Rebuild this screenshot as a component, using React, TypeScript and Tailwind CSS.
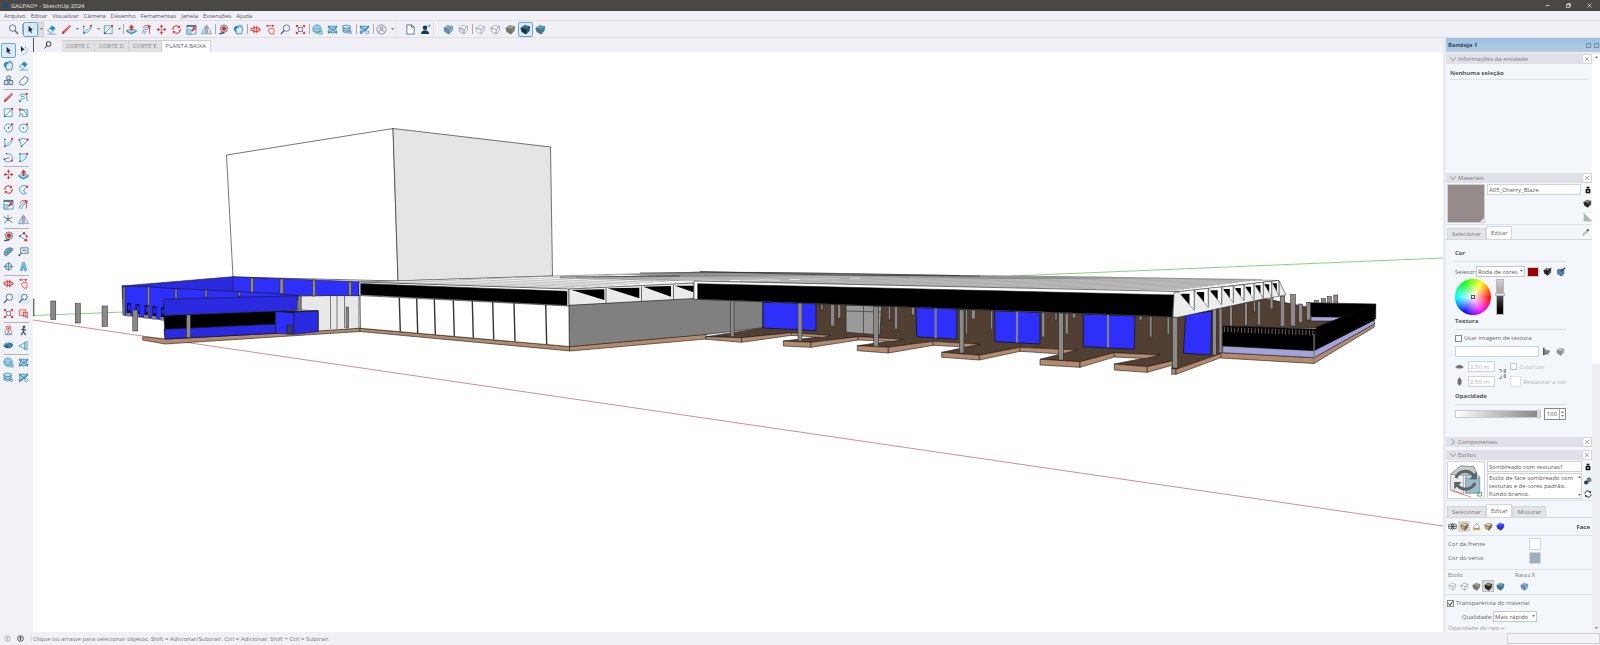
import { type ReactNode } from 'react';
import { clsx } from 'clsx';

const B = '#2f8dbb';
const N = '#34536f';
const R = '#dd3236';

const cube = (top: string, left: string, right: string, edge = '#5f7482') => (
  <g stroke={edge} strokeWidth="1.4" strokeLinejoin="round">
    <path d="M2 9l8-6 11 3-7 6z" fill={top} />
    <path d="M2 9l12 3-1 10-9-5z" fill={left} />
    <path d="M21 6l-7 6-1 10 7-7z" fill={right} />
  </g>
);

const icons: Record<string, ReactNode> = {
  search: <g stroke={N} strokeWidth="1.6"><circle cx="10" cy="9" r="7" fill="#eef5fa" /><path d="M15 14l7 8" strokeWidth="2.6" /></g>,
  zoom: <g stroke={N} strokeWidth="1.6"><circle cx="14" cy="9" r="7" fill="#eef5fa" /><path d="M9 14l-7 8" strokeWidth="2.6" /></g>,
  zoomWin: <g><path d="M2 2h20v20H2z" fill="#dcedf7" stroke="#a9cfe4" strokeDasharray="3 2" /><g stroke={N} strokeWidth="1.6"><circle cx="14" cy="9" r="6" fill="#eef5fa" /><path d="M10 13l-7 8" strokeWidth="2.4" /></g></g>,
  select: <path d="M8 4l9 9-4 .5 2.5 5-2 1-2.5-5L8 18z" fill="#16233a" />,
  lasso: <g><path d="M6 2l9 9-5 .5L7 16z" fill="#16233a" /><path d="M15 5c9 3 7 12-7 17" fill="none" stroke={B} strokeWidth="1.6" strokeDasharray="3 2" /></g>,
  eraser: <g><path d="M3 14L13 3l8 6-10 11z" fill={B} /><path d="M3 14l5-5 8 6-5 5z" fill="#d9ecf6" stroke={B} /><path d="M3 22h19" stroke={B} strokeWidth="1.5" /></g>,
  tag: <path d="M3 15L14 3l8 4-1 7-9 8-7-1z" fill="#f2f8fc" stroke={N} strokeWidth="1.6" />,
  paint: <g><path d="M6 11l9-7 6 6-2 11-11 1z" fill="#d9ecf6" stroke={N} strokeWidth="1.4" /><path d="M2 8c5-7 11-5 10 1-4-2-7 2-5 8-4 0-6-4-5-9z" fill={B} /><path d="M12 3c6-2 9 2 8 6" fill="none" stroke={B} strokeWidth="1.8" /></g>,
  stamp: <g fill="#d3dee6" stroke={N} strokeWidth="1.6"><path d="M8 4c0-3 8-3 8 0v6H8zM3 12h8v9H3zM13 12h8v9h-8z" /></g>,
  pencil: <g><path d="M2 22l2-6L19 2l3 3L8 19z" fill={R} /><path d="M6 17L20 4" stroke="#fff" strokeWidth="1" /><path d="M2 22l2-5 3 3z" fill="#444" /></g>,
  freehand: <g fill="none" stroke={B} strokeWidth="1.8"><path d="M4 21c1-9 12-4 10-9S6 12 5 8s8-5 13-1c3 4-1 7 3 13" /><circle cx="4" cy="20" r="1.5" fill={N} /><circle cx="19" cy="4" r="2.5" fill={R} stroke="none" /></g>,
  arc: <g fill="none" strokeWidth="1.6"><path d="M4 5v15c9 0 15-7 16-15" stroke={B} /><path d="M4 20L20 5" stroke={N} strokeDasharray="3 2" /><circle cx="4" cy="5" r="1.6" fill={N} /><circle cx="4" cy="20" r="1.6" fill={N} /><circle cx="20" cy="4" r="2.5" fill={R} /></g>,
  arc2: <g fill="none" strokeWidth="1.6"><path d="M3 6c8-5 14-3 18 1L8 21z" stroke={B} fill="#e6f3fa" /><circle cx="3" cy="6" r="2" fill={R} /><circle cx="8" cy="20" r="1.6" fill={N} /><circle cx="21" cy="6" r="2.5" fill={R} /></g>,
  arc3: <g fill="none" strokeWidth="1.6"><path d="M7 3c14 0 20 16 7 18S2 15 2 15" stroke={B} /><path d="M2 16l12-4" stroke={N} /><circle cx="8" cy="4" r="1.6" fill={N} /><circle cx="3" cy="16" r="1.6" fill={N} /><circle cx="19" cy="19" r="2.5" fill={R} /></g>,
  pie: <g fill="none" strokeWidth="1.6"><path d="M4 4h16c0 10-8 16-16 17z" stroke={B} fill="#d9ecf6" /><circle cx="4" cy="4" r="1.6" fill={N} /><circle cx="4" cy="20" r="1.6" fill={N} /><circle cx="20" cy="4" r="2.5" fill={R} /></g>,
  rect: <g fill="none" strokeWidth="1.6"><path d="M3 4h17v17H3z" stroke={B} fill="#eef6fb" /><path d="M3 21L20 4" stroke={N} strokeWidth="1.2" /><circle cx="4" cy="20" r="1.8" fill={N} /><circle cx="20" cy="4" r="2.5" fill={R} /></g>,
  rotRect: <g fill="none" strokeWidth="1.6"><path d="M4 6h17v15H10v-6H4z" stroke={B} fill="#eef6fb" /><path d="M4 6c8-1 14 5 15 13" stroke={N} /><circle cx="4" cy="5" r="2.500" fill={R} /><circle cx="4" cy="19" r="1.6" fill={N} /></g>,
  circle: <g fill="none" strokeWidth="1.6"><circle cx="12" cy="13" r="9" stroke={B} fill="#eef6fb" /><path d="M12 13l8-8" stroke={N} strokeWidth="1.2" /><circle cx="12" cy="13" r="1.8" fill={N} /><circle cx="20" cy="5" r="2.5" fill={R} /></g>,
  polygon: <g fill="none" strokeWidth="1.6"><path d="M7 5h10l5 8-5 9H7l-5-9z" stroke={B} fill="#eef6fb" /><circle cx="12" cy="13" r="1.8" fill={N} /><circle cx="20" cy="5" r="2.5" fill={R} /></g>,
  push: <g><path d="M1 14l11-4 11 4-11 6z" fill="#b9def0" stroke={B} strokeWidth="1.5" /><path d="M1 14v3l11 6 11-6v-3l-11 6z" fill={B} /><path d="M12 1l6 7h-4v7h-4V8H6z" fill={R} /></g>,
  follow: <g fill="none" strokeWidth="1.8"><path d="M3 21c1-8 6-13 14-15M8 22c0-6 4-10 9-12" stroke={B} /><path d="M3 9c4-6 10-7 15-5" stroke={R} /><path d="M14 2l8 2-4 7z" fill={R} /><path d="M19 9l-1 12" stroke={R} /></g>,
  move: <path d="M12 1l4 5h-3v4h-2V6H8zM12 23l4-5h-3v-4h-2v4H8zM1 12l5-4v3h4v2H6v3zM23 12l-5-4v3h-4v2h4v3z" fill={R} />,
  rotate: <g fill="none" stroke={R} strokeWidth="2.2"><path d="M4 13c-1-8 8-12 13-7M20 11c1 8-8 12-13 7" /><path d="M14 8l6 1V3zM10 16l-6-1v6z" fill={R} stroke="none" /></g>,
  offset: <g fill="none" strokeWidth="1.8"><path d="M19 5C9 0 1 8 4 15s9 8 14 5c-6-1-8-9 1-12z" stroke={B} fill="#e6f3fa" /><circle cx="20" cy="6" r="2.5" fill={R} /></g>,
  scale: <g><path d="M2 3h20v19H2z" fill="#eef6fb" stroke={B} strokeWidth="1.6" /><path d="M2 3h20v3H2z" fill={N} /><path d="M2 12h9v10H2z" fill="#a6d3e8" stroke={B} /><path d="M11 14l5-5-3-2h8v7l-2-2-5 5z" fill={R} /></g>,
  flip: <g strokeWidth="1.4"><path d="M10 4v17H1z" fill="#c9e5f3" stroke={B} /><path d="M14 4v17h9z" fill="#e6e6ee" stroke="#77808c" /><path d="M12 1v22" stroke={R} strokeWidth="1" /></g>,
  tape: <g><circle cx="13" cy="10" r="8" fill="#ecc3c5" stroke={N} strokeWidth="1.4" /><circle cx="13" cy="10" r="4" fill={R} stroke="#70202a" /><path d="M2 20l11-3 2 3-11 3z" fill={N} /></g>,
  dimension: <g fill="none" strokeWidth="1.6"><path d="M4 11L13 4M4 11l13 9M13 5l6 7" stroke={B} /><circle cx="13" cy="5" r="2.6" fill={R} /><circle cx="4" cy="11" r="2" fill={N} /><circle cx="19" cy="12" r="2.5" fill={R} /><circle cx="17" cy="20" r="3" fill={R} /></g>,
  protractor: <path d="M3 19C2 8 10 2 20 5l2 3L7 22zM9 16c0-5 3-8 8-7z" fill="#74b3d1" stroke={N} strokeWidth="1.6" fillRule="evenodd" />,
  text: <g fill="#eef6fb" stroke={N} strokeWidth="1.5"><path d="M6 4h16v12H6z" /><path d="M3 21l4-6M10 12l3-5 3 5M18 8v4" /><circle cx="3" cy="20" r="1.5" fill={N} /></g>,
  section: <g fill="none" stroke={N} strokeWidth="1.6"><circle cx="12" cy="12" r="7" fill="#dbe6ee" /><path d="M1 12h22M12 2v20" stroke={B} /></g>,
  text3d: <path d="M5 21L10 3h4l5 17-4 2-4-10-2 9z" fill="#7cc2e4" stroke={B} strokeWidth="1.4" />,
  axes: <g fill="none" strokeWidth="2"><path d="M11 12V2" stroke={B} /><path d="M11 12l10 7" stroke="#3aa54a" /><path d="M11 12l9-5" stroke={R} /><path d="M11 12L3 20M11 12L2 6" stroke={N} /><circle cx="11" cy="12" r="2.5" fill={B} stroke="none" /></g>,
  orbit: <g fill="none" stroke={R} strokeWidth="2.2"><ellipse cx="12" cy="12" rx="10" ry="4" /><path d="M9 4v16M15 4v16" /></g>,
  hand: <g><path d="M2 4l5-3v2h9V1l5 3-5 3V5H7v2z" fill={R} /><path d="M8 12c2-3 11-3 12 0l-1 10h-6l-5-6z" fill="#f9e9e7" stroke={R} strokeWidth="1.6" /></g>,
  extents: <g><circle cx="12" cy="12" r="5" fill="#eef0f4" stroke={N} strokeWidth="1.4" /><path d="M2 2h6L2 8zM22 2v6l-6-6zM2 22v-6l6 6zM22 22h-6l6-6z" fill={R} /><path d="M4 4l5 5M20 4l-5 5M4 20l5-5M20 20l-5-5" stroke={R} strokeWidth="1.6" /></g>,
  window: <g fill="none" strokeWidth="1.6"><path d="M3 4h14v12H3z" stroke={R} fill="#fbeeee" /><path d="M9 9h6M12 10h9v9h-9z" stroke={R} /><path d="M17 19l5 3" stroke={N} /></g>,
  camera: <g fill="none" strokeWidth="1.6"><circle cx="12" cy="7" r="5" stroke={R} fill="#f9e2e3" /><circle cx="12" cy="7" r="2" fill={R} /><path d="M5 12v9h14v-9M9 22l3-9 3 9" stroke="#6e7480" /></g>,
  walk: <g fill="none" stroke={N} strokeWidth="2.6"><circle cx="13" cy="4" r="1.6" fill={N} /><path d="M12 7v8l5 7M12 14l-5 8M7 11l5-3 5 4" /></g>,
  look: <g><path d="M1 12C5 4 18 3 22 11c-3 9-16 10-21 1z" fill={N} /><circle cx="14" cy="12" r="5" fill={B} /><path d="M2 11c5 0 7-5 12-5" stroke="#9dcde6" strokeWidth="2" fill="none" /></g>,
  cut: <g fill="none" strokeWidth="1.6"><path d="M2 13L20 3v19z" stroke={B} fill="#d9ecf6" /><path d="M15 6v15" stroke={N} /></g>,
  warehouse: <g fill="none" stroke={B} strokeWidth="2"><circle cx="11" cy="11" r="9" fill="#d9ecf6" /><path d="M5 15V9l6-4 6 4v6l-6 3zM11 18v-8M7 10l4 2 5-2" strokeWidth="1.6" /><path d="M15 16h7v6h-7z" fill="#bcd9ea" strokeWidth="1.4" /></g>,
  ext: <g fill="none" stroke={B} strokeWidth="2"><path d="M3 4l5 2 4-2 4 2 5-2v4l-3 3 3 3v6l-5-2-4 2-4-2-5 2v-6l3-3-3-3z" fill="#a6d3e8" /><path d="M4 6l17 13M21 6L4 19" stroke={N} strokeWidth="1.4" /></g>,
  layers: <g fill="#bfe0f0" stroke={B} strokeWidth="1.6"><path d="M2 4l8-2 8 2v13l-8 3-8-3z" /><path d="M2 8l8 3 8-3M2 13l8 3 8-3" stroke={N} /><path d="M13 17h9l-4 5z" fill="#d9ecf6" /></g>,
  gear: <g fill="none" stroke={B} strokeWidth="2"><path d="M3 4l5 2 4-2 4 2 5-2v4l-8 6-5 5-5 2v-6l3-3-3-3z" fill="#a6d3e8" /><path d="M4 6l12 9M21 6L4 19" stroke={N} strokeWidth="1.4" /><circle cx="18" cy="18" r="3.5" fill="#eef6fb" strokeWidth="1.6" /></g>,
  user: <g fill="none" stroke="#5c6b7d" strokeWidth="1.5"><circle cx="12" cy="12" r="10" /><circle cx="12" cy="9" r="3.2" /><path d="M6 19c0-7 12-7 12 0" /></g>,
  doc: <path d="M4 2h10l6 5v15H4zM14 2v5h6" fill="#fff" stroke={N} strokeWidth="1.6" />,
  person: <g fill="#17395c"><circle cx="11" cy="8" r="5" /><path d="M2 22c0-11 18-11 18 0z" /><path d="M20 1v6M17 4h6" stroke={B} strokeWidth="1.6" /></g>,
  cubeXray: cube('#84abc4', '#6a90ab', '#8fb4cb', '#5a7e96'),
  cubeBack: cube('#f3f6f8', '#d5dde4', '#eef2f5', '#8d98a3'),
  cubeWire: cube('none', 'none', '#e2eaf0', '#9aa5ae'),
  cubeHidden: cube('#fff', '#fff', '#fff', '#7d8893'),
  cubeShade: cube('#a5a592', '#77776a', '#89897a', '#66675c'),
  cubeTex: cube('#3c6f90', '#1c2e3c', '#2f5c75', '#1f3444'),
  cubeMono: cube('#4cabd4', '#5c7066', '#3388b0', '#446b7c'),
  cubeDark: cube('#8b8b7a', '#23231d', '#3c3b2f', '#1d1d18'),
  cubeTan: cube('#efdcb5', '#d0ad70', '#7a6c50', '#5e5848'),
  cubeBlue: cube('#4a52ff', '#2a2ff0', '#2127d0', '#3237c9'),
  cubeGrey: cube('#c5c5c5', '#8f8f8f', '#a8a8a8', '#7a7a7a'),
  edges: <g fill="none" stroke="#2e3338" strokeWidth="1.8"><path d="M2 7l7-2v14l-7-2zM15 5l7 2v10l-7 2zM2 12h20M12 3v18" /></g>,
  ground: <g><path d="M1 22l4-8h14l4 8z" fill="#e3a95e" /><path d="M5 12l7-8 7 8v5H5z" fill="#fff" stroke="#555" strokeWidth="1.5" /></g>,
  down: <g fill="#111"><path d="M7 2h10v3h-3v4h5v13H5V9h5V5H7z" /><path d="M9 15h6M12 12v6" stroke="#fff" strokeWidth="2" /></g>,
  half: <g><path d="M1 1h22v22H1z" fill="#fff" stroke="#d0d4d8" /><path d="M2 2v20h20z" fill="#a9b8bf" /></g>,
  dropper: <g><path d="M3 22l2-6 8-8 3 3-8 8z" fill="#dfe6ea" stroke="#6a747c" strokeWidth="1.5" /><path d="M13 6l5-4 4 4-4 5z" fill="#4e5a63" /></g>,
  check: <g>{cube('#777', '#222', '#444', '#222')}<path d="M9 8l4 5L22 2" fill="none" stroke="#111" strokeWidth="2.5" /></g>,
  screen: <g><path d="M2 7h16v12H2z" fill="#4b8fd0" stroke="#1f3e60" strokeWidth="1.8" /><path d="M7 22h8" stroke="#1f3e60" strokeWidth="3" /><path d="M10 12L22 2" stroke="#1f3e60" strokeWidth="3" /></g>,
  folder: <g><path d="M3 2h4v20H3z" fill="#444" /><path d="M7 8h6l2 2h6l-5 9H7z" fill="#8d8a73" stroke="#555" /></g>,
  horiz: <path d="M0 13l7-4c3-2 7-2 10 0l7 4-7 4H7z" fill="#707070" />,
  vert: <path d="M12 0l5 7c1 3 1 7 0 10l-5 7-5-7V7z" fill="#707070" />,
  refresh: <g fill="none" stroke="#222" strokeWidth="3"><path d="M3 11c0-9 12-11 16-4M21 13c0 9-12 11-16 4" /><path d="M21 2v7h-6zM3 22v-7h6z" fill="#222" stroke="none" /></g>,
  mix: <g stroke="#1d2730" strokeWidth="1.500"><path d="M2 12h9v9H2z" fill="#30414d" /><path d="M10 4l8-2 4 8-6 6-6-3z" fill="#70889a" /></g>,
};

function Icon({ name, className = 'size-3' }: { name: string; className?: string }) {
  return <svg viewBox="0 0 24 24" fill="none" aria-hidden="true" className={clsx('shrink-0', className)}>{icons[name]}</svg>;
}

const Caret = ({ className = 'w-1 h-[3px]' }: { className?: string }) => (
  <svg viewBox="0 0 6 4" aria-hidden="true" className={clsx('fill-[#777]', className)}><path d="M0 0h6L3 4z" /></svg>
);

const menus = ['Arquivo', 'Editar', 'Visualizar', 'Câmera', 'Desenho', 'Ferramentas', 'Janela', 'Extensões', 'Ajuda'];

// 'v' drop-down arrow, '|' separator, '/' end of a toolbar
const topTools = 'search | select v eraser pencil v arc v rect v | push follow move rotate scale flip | tape paint | orbit hand zoom extents | warehouse ext layers | gear | user v / doc person / cubeXray cubeBack | cubeWire cubeHidden cubeShade cubeTex cubeMono'.split(' ');

const sideTools = [
  ['select', 'lasso', 'paint', 'eraser', 'stamp', 'tag'],
  ['pencil', 'freehand', 'rect', 'rotRect', 'circle', 'polygon', 'arc', 'arc2', 'arc3', 'pie'],
  ['move', 'push', 'rotate', 'offset', 'scale', 'follow', 'axes', 'flip'],
  ['tape', 'dimension', 'protractor', 'text', 'section', 'text3d'],
  ['orbit', 'hand', 'zoom', 'zoomWin', 'extents', 'window'],
  ['camera', 'walk', 'look', 'cut'],
  ['warehouse', 'ext', 'layers', 'gear'],
];

function ToolButton({ name, active }: { name: string; active?: boolean }) {
  return (
    <button
      aria-label={name}
      className={clsx('w-[15px] h-[15px] shrink-0 flex items-center justify-center', active && 'bg-[#d9ebf9] border border-[#6aa7d2] rounded-[2px]')}
    >
      <Icon name={name} className="size-[11px]" />
    </button>
  );
}

function TopToolbar() {
  return (
    <div className="h-[18px] shrink-0 flex items-center pl-[6px] bg-[#f0f0f6] border-y border-[#dedee4]">
      {topTools.map((t, i) => {
        if (t === '|') return <span key={i} className="w-[2px] h-[10px] flex justify-center"><span className="w-px bg-[#a9a9a6]" /></span>;
        if (t === '/') return <span key={i} className="w-2 h-4 flex"><span className="w-px bg-[#e0e0e6]" /></span>;
        if (t === 'v') return <button key={i} aria-label="Mais" className={clsx('w-[6px] h-[15px] flex items-center justify-center', i === 3 && 'bg-[#e0e0e4] border border-[#cfcfd4]')}><Caret className="w-[3px] h-[2px]" /></button>;
        return <ToolButton key={i} name={t} active={t === 'select' || t === 'cubeTex'} />;
      })}
    </div>
  );
}

function SideToolbar() {
  return (
    <div className="w-[33px] shrink-0 bg-[#f0f2f8] pt-[5px] flex flex-col">
      {sideTools.map((group, g) => (
        <div key={g} className="mx-px">
          {g > 0 && <div className="h-[2px] mx-[3px] flex items-center"><div className="h-px w-full bg-[#b4b4b6]" /></div>}
          <div className="grid grid-cols-2 w-[30px]">
            {group.map((t, i) => <ToolButton key={i} name={t} active={t === 'select'} />)}
          </div>
        </div>
      ))}
    </div>
  );
}

/* ---------- model ---------- */

const K = '#1a1a1a';
const BLUE = '#2f2ffc';
const DBLUE = '#2a2ae0';
const CLAY = '#b48a6e';
const SOIL = '#523f33';

type P = { d: string; f?: string; s?: string; w?: number };
const Poly = ({ d, f = '#fff', s = K, w = 0.6 }: P) => <polygon points={d} fill={f} stroke={s} strokeWidth={w} />;

// x, top, bottom, width
const Post = ({ p }: { p: number[] }) => (
  <rect x={p[0] - p[3] / 2} y={p[1]} width={p[3]} height={p[2] - p[1]} fill="#8d8986" stroke="#222" strokeWidth="0.5" />
);

const pads = [
  ['706,336.7 741.7,337.7 741.7,342.3 706,339.3', '741.7,337.7 791.7,332.7 791.7,335.3 741.7,342.3', '791.7,332.7 831,335.500 823,337.500 791.7,335.3'],
  ['783.3,341 811,342.3 811,347.3 783.3,346', '811,342.3 858.3,336.7 858.3,340 811,347.3', '858.3,336.7 903,339.3 893,341.500 858.3,340'],
  ['857.3,345.7 888.3,347.3 888.3,353 857.3,350.7', '888.3,347.3 933.3,341.3 933.3,345.3 888.3,353', '933.3,341.3 980,344.3 967,347 933.3,345.3'],
  ['941.7,352.3 979.3,355.3 979.3,360 941.7,357.3', '979.3,355.3 1020,347.3 1020,351.3 979.3,360', '1020,347.3 1076.7,350 1062,354 1020,351.3'],
  ['1040,359.3 1080,361.7 1080,367.3 1040,365', '1080,361.7 1114.3,352.7 1114.3,357 1080,367.3', '1114.3,352.7 1160,355 1146,358.500 1114.3,357'],
  ['1114.3,364 1147.3,366.7 1147.3,372.3 1114.3,370', '1147.3,366.7 1173,360.7 1173,365 1147.3,372.3'],
  ['1171.7,368.3 1176,369.3 1176,374.3 1171.7,374.3', '1176,369.3 1221.7,353.3 1221.7,357.3 1176,374.3'],
];

const panels: [string, number][] = [
  ['763,302 816,303.5 816,330.7 763,328', 0],
  ['916,307.5 957,309 956.7,339.3 916.7,336.7', 935.7],
  ['994.5,310.7 1040,312.3 1040,344 995,341.7', 1017],
  ['1083.3,314 1135,316 1134.3,349.3 1083.3,346.7', 1108],
  ['1185.7,315 1211.7,311 1210.7,355 1183.3,353.3', 0],
];

const shortPosts = [
  [822, 304, 310, 2], [832.7, 304, 326, 4], [839.3, 304, 318, 3], [889.3, 306, 320, 2], [896, 306, 329, 3], [913, 307, 315, 3],
  [973.3, 310, 319, 4], [966.5, 310, 334, 2], [991.7, 311, 329, 2], [1043.3, 312, 337, 3], [1066.7, 313, 334, 3], [1056, 313, 320, 2],
  [1074, 313, 318, 3], [1140.5, 316, 320, 3], [1150.7, 316, 337, 2.5], [1168.3, 317, 334, 2.5],
];

const longPosts = [
  [732.3, 300, 336.7, 3.5], [800, 302, 341, 4], [876, 306.7, 346.7, 4.5], [961.7, 310, 353, 4.5], [1061, 312.7, 360, 4.5], [1175, 317, 368, 5],
  [1214.5, 309, 355, 3.5], [1220.5, 308, 353, 3], [1231, 306, 326, 2.5], [1246, 303, 325, 2.5], [1254.5, 301, 312, 2], [1259, 301, 325, 3],
  [1271.5, 297, 309, 3], [1282.5, 296, 326.5, 4.5], [1293, 294.5, 326, 5], [1300.7, 304, 322.5, 4], [1308.5, 302.5, 320, 4],
  [1316.5, 300.5, 303, 4], [1323.5, 298.5, 303, 4], [1329.5, 296.5, 303, 4], [1335.8, 295, 303, 4],
];

// saw-tooth gable: x and height of each ridge, and the lower edge below it
const toothX = [1178.3, 1194.3, 1208.3, 1221.7, 1233.3, 1244, 1254, 1263.3, 1271.7, 1279];
const toothTop = [291.7, 290, 288.3, 287, 286, 284.7, 283.3, 282.3, 281.3, 280.7];
const toothBot = [317, 310.5, 307.5, 305, 303, 301, 300, 298.5, 297, 296];

function Model() {
  return (
    <svg viewBox="33 52 1410 580" preserveAspectRatio="xMidYMid slice" className="block w-full h-full bg-white" role="img" aria-label="GALPAO">
      <path d="M33 315.5L124 312M1012 276L1443 258" stroke="#7fd67f" strokeWidth="1" />
      <path d="M33 320L1443 526" stroke="#d08080" strokeWidth="0.9" />
      {[[33, 299, 316, 2], [53.3, 301, 319.5, 5], [77.8, 303.5, 323, 5], [104.8, 306, 326.5, 5.5]].map((p) => <Post key={p[0]} p={p} />)}

      {/* tower */}
      <Poly d="226.5,155 393,128.5 398,281 233,277" />
      <Poly d="393,128.5 550.5,147 552.5,276 398,281" f="#e5e5e5" />

      {/* blue wing */}
      <Poly d="142.7,336.7 165,339 275.7,333 360,328 360,331.5 165,344 142.7,340" f={CLAY} />
      <Poly d="301,296 359,295 359,328.3 318,331 318,311 301,310" f="#e8e8e8" />
      <path d="M330.500 296v33M337 296v33M344.500 296v32" stroke="#333" strokeWidth="0.6" />
      <Post p={[347.3, 307, 328, 2.5]} />
      <Poly d="122,286 232.7,276.7 232.7,292 146.7,288" f={DBLUE} />
      <Poly d="232.7,276.7 359,281.7 359,295.7 298,295.5 232.7,292" f={BLUE} />
      {[[252, 278, 293, 3], [281.7, 279, 293.5, 3.5], [314, 280, 296, 3], [350, 282, 295.5, 3]].map((p) => <Post key={p[0]} p={p} />)}
      <Poly d="122,286 146.7,286.7 164,288 276,293.5 300,296 300,300 164,302 164,320 123.3,315" f={BLUE} />
      {[[124, 287, 315, 2], [148.5, 287, 317, 2.5], [176, 289, 299, 2], [206, 290, 297, 2], [239.5, 292, 296, 2]].map((p) => <Post key={p[0]} p={p} />)}
      {[127, 135.5, 144.5, 152.5, 161].map((x, i) => (
        <g key={x}>
          <rect x={x} y={303 + i} width="4" height="11" fill="#121244" />
          <rect x={x + 1} y={305 + i} width="2.5" height="5" fill={DBLUE} />
          <rect x={x - 0.5} y={313 + i} width="4" height="3.5" fill="#8a7a70" />
        </g>
      ))}
      <Post p={[135.3, 310, 331, 5]} />
      <Poly d="164,315.5 275.7,311 275.7,333.3 165,339" f="#000" />
      <Poly d="164,329.3 275.7,324 275.7,333.3 165,339" f={DBLUE} />
      <Poly d="164,299.3 297.3,295.7 297.3,310.5 164,315.5" f={DBLUE} />
      <Post p={[299.5, 296, 310, 3]} />
      <Post p={[188.5, 315, 337.5, 4]} />
      <Poly d="275.7,311.5 294,311.5 294,334.3 275.7,333.3" f={BLUE} />
      <Poly d="275.7,311.5 318.3,310.7 294,313" f="#111" />
      <Poly d="294,312 318.3,311 318.3,331.7 294,334.3" f={DBLUE} />
      <path d="M287 334v-9h5v9z" fill="#3d3a70" stroke={K} strokeWidth="0.6" />

      {/* first shed */}
      <Poly d="360,328.3 569.5,346.5 706,334 706,339 570.5,351 360,331.5" f={CLAY} />
      <path d="M569.5 346v5" stroke={K} strokeWidth="0.7" />
      <Poly d="360,294 569,305 569.5,346.5 360.5,328.3" />
      {[399.3, 416.7, 434.3, 453.3, 472.3, 492.7, 514, 545.7].map((x) => (
        <path key={x} d={`M${x} ${296 + (x - 360) * 0.045}L${x + 1} ${328 + (x - 360) * 0.087}`} stroke="#333" strokeWidth="1.4" />
      ))}
      <Poly d="569.3,305 694,298 763.3,301.7 763,327.7 706,334.5 569.3,346.7" f="#808080" />
      <Poly d="359,282 552,276 703.3,272 820,273 953,275.5 1100,277 1279,280.5 1179,292 694,284 569,289.5" f="#f6f6f6" w={0.4} />
      <polygon points="620,274.5 703,271.5 820,273 953,275.5 1150,278.5 1000,279 820,276 660,276.5" fill="#989898" />
      {Array.from({ length: 9 }, (_, i) => (
        <path key={i} d={`M${375 + i * 28} ${281.5 - i * 0.8}L${575 + i * 13} ${288 - i * 0.9}`} stroke="#8a8a8a" strokeWidth="0.5" />
      ))}
      {Array.from({ length: 8 }, (_, i) => (
        <path key={i} d={`M${560 + i * 16} ${278 - i * 0.4}L${700 + i * 30} ${281 - i * 0.5}`} stroke="#777" strokeWidth="0.5" />
      ))}
      {Array.from({ length: 15 }, (_, i) => (
        <path key={i} d={`M${700 + i * 20} ${282 - i * 0.45}L${1178 + i * 6} ${290 - i * 0.75}`} stroke="#8c8c8c" strokeWidth="0.6" />
      ))}
      <path d="M640 273l120-.5 200 3M700 271.5l130 3.5 150 1M560 277l120-1" stroke="#2c2c2c" strokeWidth="0.7" fill="none" />
      <Poly d="359,282 569,289 569,306 359,295.5" />
      <Poly d="360.7,283.6 567,291.3 567,305.3 360.7,294.7" f="#000" />
      <Poly d="569,289 694,283 694,298.5 569,305.3" f="#ebebeb" />
      <path d="M571.7 290l32.6-.7v10.7zM607.7 288.300l31.600-.6v10.600zM643.300 286.700l27.700-.7v10.700zM675 285.700h18.500v6.600z" fill="#000" />
      <path d="M606 288v15M641.500 286.500v15M673.500 285v14.500" stroke="#333" strokeWidth="0.7" />

      {/* second shed, floor and inner wall */}
      <Poly
        d="706,336.7 741.7,337.7 791.7,332.7 831,335.5 783.3,341 811,342.3 858.3,336.7 903,339.3 857.3,345.7 888.3,347.3 933.3,341.3 980,344.3 941.7,352.3 979.3,355.3 1020,347.3 1076.7,350 1040,359.3 1080,361.7 1114.3,352.7 1160,355 1114.3,364 1147.3,366.7 1173,360.7 1171.7,368.3 1176,369.3 1221.7,353.3 1224,327 1318,328 1345,318 1312,308 1262,298 1173,314 763,300 763,328"
        f={SOIL}
      />
      {pads.flat().map((d) => <Poly key={d} d={d} f={CLAY} />)}
      <Poly d="846,305 881.5,306 880,335 846,332.3" f="#999" />
      <path d="M846 311l35 1M863.500 305v28" stroke="#444" strokeWidth="0.8" />
      {panels.map(([d, x]) => (
        <g key={d}>
          <Poly d={d} f={BLUE} w={0.9} />
          {x > 0 && <path d={`M${x} ${308 + (x - 936) * 0.04}V${338 + (x - 936) * 0.055}`} stroke="#7f7f8c" strokeWidth="2.2" />}
        </g>
      ))}
      {shortPosts.map((p) => <Post key={p[0]} p={p} />)}

      {/* terrace */}
      <Poly d="1311,316.5 1341,316.5 1338,321 1311,321" f="#a9a9e0" />
      <Poly d="1308,302.7 1375.7,304 1375.7,319 1341.7,317.3 1311.7,316.7" f="#000" />
      {longPosts.map((p) => <Post key={p[0]} p={p} />)}
      <Poly d="1221,352.7 1314,357.7 1374.3,323.5 1374.3,327 1314,363.5 1221,358" f={CLAY} />
      <Poly d="1222.7,345 1314,350 1374.3,320 1374.3,324 1314,357.7 1222.7,352.7" f="#a3a3dc" />
      <Poly d="1223,326 1316,329 1314,350.7 1222.7,346" f="#000" />
      <path d="M1224 329.500L1316 333" stroke="#6b635c" strokeWidth="5" strokeDasharray="1 2.400" />
      <Poly d="1316,327.3 1375.7,304 1374.3,320 1314,350.7" f="#000" />
      <path d="M1314 334v29.5" stroke="#777" strokeWidth="1.2" />

      {/* second shed, fascia and saw-tooth gable */}
      <Poly d="694,281 1179,291.5 1173,317 694,299.3" />
      <Poly d="697.7,283.7 1174,295 1172.3,316.7 697.7,299" f="#000" />
      <Poly d="1178.3,291.7 1279,280.7 1286,295 1261.7,299.3 1178,317.3 1173,317 1174,293" f="#ececec" w={0.5} />
      {toothX.slice(0, -1).map((x, i) => {
        const n = toothX[i + 1];
        const w = n - x;
        const t = toothTop[i];
        const h = toothBot[i + 1] - t;
        return (
          <g key={x} stroke="#444" strokeWidth="0.5">
            <polygon points={`${x},${t} ${n},${toothTop[i + 1]} ${n},${t + h}`} fill="#fff" />
            <polygon points={`${x + w * 0.2},${t + 2} ${x + w * 0.7},${t + 2} ${x + w * 0.7},${t + h * 0.68} ${x + w * 0.2},${t + h * 0.2}`} fill="#000" stroke="none" />
            <path d={`M${n} ${toothTop[i + 1]}v${h}`} />
          </g>
        );
      })}
    </svg>
  );
}

/* ---------- tray ---------- */

const field = 'bg-white border border-[#cfd2d8] text-[#555] px-px min-w-0 outline-none';

function SectionHeader({ title, open = true }: { title: string; open?: boolean }) {
  return (
    <div className="h-[10px] flex items-center bg-[#e0e1e8] text-[#777]">
      <svg viewBox="0 0 10 10" className={clsx('size-[6px] ml-1 mr-[2px]', !open && '-rotate-90')} fill="none" stroke="#888" strokeWidth="1.4"><path d="M0 2l5 6 5-6" /></svg>
      <h2 className="flex-1">{title}</h2>
      <button aria-label={`Fechar ${title}`} className="size-[10px] bg-white border border-[#d5d6dc] flex items-center justify-center">
        <svg viewBox="0 0 8 8" className="size-[4px]" stroke="#888" strokeWidth="1.4"><path d="M0 0l8 8M8 0L0 8" /></svg>
      </button>
    </div>
  );
}

function Tabs({ items }: { items: string[] }) {
  return (
    <div className="h-[13px] flex items-end pl-px border-b border-[#d3d6dc]">
      {items.map((t) => (
        <button key={t} className={clsx('px-[4px] border border-b-0 border-[#d3d6dc]', t === 'Editar' ? 'h-[13px] bg-white text-[#666]' : 'h-[11px] bg-[#e3e4e9] text-[#777]')}>{t}</button>
      ))}
    </div>
  );
}

function Dropdown({ id, value, className }: { id: string; value: string; className: string }) {
  return (
    <div className={clsx('relative', className)}>
      <select id={id} className="appearance-none w-full h-[11px] bg-white border border-[#c3c6cc] text-[#555] pl-px block"><option>{value}</option></select>
      <Caret className="absolute right-[2px] top-1 w-[3px] h-[2px] pointer-events-none" />
    </div>
  );
}

const Tick = () => <svg viewBox="0 0 10 10" className="absolute inset-px size-[5px] pointer-events-none" fill="none" stroke="#222" strokeWidth="2"><path d="M1 5l3 4 5-8" /></svg>;

function Check({ label, checked, dim }: { label: string; checked?: boolean; dim?: boolean }) {
  return (
    <label className={clsx('flex items-center gap-[2px] whitespace-nowrap', dim ? 'text-[#b5b8be]' : 'text-[#666]')}>
      <span className="relative size-[7px]">
        <input type="checkbox" defaultChecked={checked} disabled={dim} className={clsx('appearance-none block size-[7px] bg-white border', dim ? 'border-[#c3c6cc]' : 'border-[#888]')} />
        {checked && <Tick />}
      </span>
      {label}
    </label>
  );
}

const Heading = ({ children }: { children: ReactNode }) => (
  <h3 className="h-[13px] font-bold text-[#555] border-b border-[#d9dce2]">{children}</h3>
);

function Materials() {
  return (
    <section>
      <SectionHeader title="Materiais" />
      <div className="flex gap-[2px] h-[42px] pt-px pl-px border-b border-[#dfe2e8]">
        <div className="w-[38px] h-[39px] bg-[#968b8b] border border-[#cfcfd2] flex items-end justify-end">
          <svg viewBox="0 0 4 4" className="size-1" fill="#eee"><path d="M4 0v4H0z" /></svg>
        </div>
        <input aria-label="Nome do material" defaultValue="A05_Cherry_Blaze" className={clsx(field, 'flex-1 h-[11px]')} />
        <div className="w-[9px] flex flex-col items-center justify-between py-[2px]">
          <Icon name="down" className="size-2" />
          <Icon name="cubeDark" className="size-[9px]" />
          <Icon name="half" className="size-[10px]" />
        </div>
      </div>
      <div className="relative pt-[2px]">
        <Tabs items={['Selecionar', 'Editar']} />
        <Icon name="dropper" className="absolute right-[2px] top-[3px] size-2" />
      </div>
      <div className="pl-[9px] pr-[26px] pt-[9px] h-[197px]">
        <Heading>Cor</Heading>
        <div className="flex items-center h-[11px] mt-[4px]">
          <label htmlFor="picker" className="w-[21px] text-[#666]">Seletor:</label>
          <Dropdown id="picker" value="Roda de cores" className="w-[49px]" />
          <button aria-label="Cor atual" className="w-3 h-[10px] mx-[2px] bg-[#980000] border border-[#ccc]" />
          <Icon name="check" className="size-[9px] mx-[2px]" />
          <Icon name="screen" className="size-[9px] ml-[3px]" />
        </div>
        <div className="flex gap-[5px] mt-[2px] h-9">
          <div className="size-9 rounded-full flex items-center justify-center bg-[radial-gradient(circle,white,transparent_70%),conic-gradient(from_90deg,#f00,#f0f,#00f,#0ff,#0f0,#ff0,#f00)]">
            <span className="size-1 border border-[#555]" />
          </div>
          <div className="w-[8px] h-9 flex flex-col border border-[#bbb]">
            <div className="h-[13px] bg-linear-to-b from-[#d6cccf] to-[#aaa0a0]" />
            <div className="h-[3px] -mx-[2px] bg-[#e6e6ea] border border-[#bbb]" />
            <div className="flex-1 bg-linear-to-b from-[#555] to-black" />
          </div>
        </div>
        <div className="mt-[2px]"><Heading>Textura</Heading></div>
        <div className="mt-1 h-[8px] flex items-center"><Check label="Usar imagem de textura" /></div>
        <div className="flex items-center mt-[4px]">
          <input aria-label="Imagem de textura" className={clsx(field, 'w-[84px] h-[11px]')} />
          <Icon name="folder" className="size-[9px] mx-[3px]" />
          <Icon name="cubeGrey" className="size-[9px] ml-[2px]" />
        </div>
        <div className="flex items-center mt-1 h-[26px] text-[#b0b2b8]">
          <div className="w-[41px] flex flex-col gap-1">
            {['horiz', 'vert'].map((n) => (
              <div key={n} className="flex items-center gap-[4px]">
                <Icon name={n} className="size-[9px]" />
                <input aria-label={n} disabled defaultValue="2,50 m" className="w-[27px] h-[11px] bg-white border border-[#cfd2d8] px-px" />
              </div>
            ))}
          </div>
          <svg viewBox="0 0 10 14" className="w-[9px] h-3 mx-1" fill="none" stroke="#777" strokeWidth="1.2"><path d="M0 1h3v4M0 13h3V9M7 1h2v4H7zM7 8h2v4H7z" /></svg>
          <div className="flex flex-col gap-1">
            <div className="h-[11px] flex items-center"><Check label="Colorizar" dim /></div>
            <div className="h-[11px] flex items-center gap-[2px] whitespace-nowrap"><button aria-label="Restaurar" className="size-[11px] shrink-0 bg-white border border-[#dcdfe4]" />Restaurar a cor</div>
          </div>
        </div>
        <div className="mt-[5px]"><Heading>Opacidade</Heading></div>
        <div className="flex items-center mt-[3px] gap-[3px]">
          <input aria-label="Opacidade" type="range" defaultValue={100} className="appearance-none w-[86px] h-2 border border-[#c9c9cc] bg-linear-to-r from-white to-[#858585] [&::-webkit-slider-thumb]:appearance-none [&::-webkit-slider-thumb]:w-[3px] [&::-webkit-slider-thumb]:h-[10px] [&::-webkit-slider-thumb]:bg-[#d8d8da]" />
          <div className="flex w-[23px] h-[12px] border border-[#888] bg-white">
            <input aria-label="Valor da opacidade" defaultValue="100" className="w-[15px] text-center text-[#555] border-r border-[#aaa]" />
            <div className="flex-1 flex flex-col items-center justify-evenly"><Caret className="rotate-180 w-[3px] h-[2px]" /><Caret className="w-[3px] h-[2px]" /></div>
          </div>
        </div>
      </div>
    </section>
  );
}

function Styles() {
  return (
    <section>
      <SectionHeader title="Estilos" />
      <div className="flex gap-[2px] h-[41px] pt-px pl-px border-b border-[#dfe2e8]">
        <svg viewBox="0 0 37 38" className="w-[38px] h-[38px] shrink-0 bg-white border border-[#cfd2d8]">
          <path d="M2 13L13 4l14 1 3 8-14 1z" fill="#c9ccce" stroke="#666" strokeWidth="0.7" />
          <path d="M2 13v16l14 5V14z" fill="#e9ebec" stroke="#888" strokeWidth="0.7" />
          <path d="M18 16h15v17H18z" fill="#9dbdcd" stroke="#5d7f91" strokeWidth="0.7" />
          <ellipse cx="25.5" cy="16" rx="7.5" ry="2.5" fill="#bcd5e1" stroke="#5d7f91" strokeWidth="0.7" />
          <path d="M2 30l22 7" stroke="#d55" strokeWidth="0.7" />
          <path d="M8 17C10 9 22 7 27 15M28 22c-3 8-14 9-19 2" fill="none" stroke="#5c6367" strokeWidth="3.2" />
          <path d="M30 10v8h-8zM6 29v-8h8z" fill="#5c6367" />
          <path d="M31 32h4v4h-4z" fill="none" stroke="#59a659" />
        </svg>
        <div className="flex-1 flex flex-col gap-px min-w-0">
          <input aria-label="Nome do estilo" defaultValue="Sombreado com texturas1" className={clsx(field, 'h-[11px]')} />
          <div className="h-[26px] flex border border-[#cfd2d8] bg-white">
            <textarea aria-label="Descrição" defaultValue="Estilo de face sombreado com texturas e de cores padrão. Fundo branco." className="flex-1 min-w-0 resize-none overflow-hidden leading-[8px] pl-px text-[#555] outline-none" />
            <div className="w-[3px] flex flex-col items-center justify-between py-[2px]"><Caret className="rotate-180 w-[3px] h-[2px]" /><Caret className="w-[3px] h-[2px]" /></div>
          </div>
        </div>
        <div className="w-[8px] flex flex-col items-center justify-between py-[2px]">
          <Icon name="down" className="size-2" />
          <Icon name="mix" className="size-2" />
          <Icon name="refresh" className="size-2" />
        </div>
      </div>
      <div className="pt-1"><Tabs items={['Selecionar', 'Editar', 'Misturar']} /></div>
      <div className="h-[18px] flex items-center border-b border-[#dfe2e8]">
        {['edges', 'cubeTan', 'ground', 'cubeTan', 'cubeBlue'].map((n, i) => (
          <button key={i} aria-label={n} className={clsx('w-[12px] h-[11px] flex items-center justify-center', i === 1 && 'bg-[#ddd8cf]')}><Icon name={n} className="size-[9px]" /></button>
        ))}
        <b className="flex-1 text-right pr-[2px] text-[#444]">Face</b>
      </div>
      <div className="h-[34px] pl-[2px] pt-[2px] flex flex-col gap-[2px] border-b border-[#dfe2e8] text-[#666]">
        <div className="h-3 flex items-center"><span className="w-[81px]">Cor da frente</span><button aria-label="Cor da frente" className="size-[12px] bg-white border border-[#d2d5da]" /></div>
        <div className="h-3 flex items-center"><span className="w-[81px]">Cor do verso</span><button aria-label="Cor do verso" className="size-[12px] bg-[#9fb0ba] border border-[#d2d5da]" /></div>
      </div>
      <div className="h-[25px] pt-px border-b border-[#dfe2e8] text-[#777]">
        <div className="flex h-[9px] pl-[2px]"><span className="w-[67px]">Estilo</span><span>Raios X</span></div>
        <div className="flex">
          {['cubeWire', 'cubeHidden', 'cubeShade', 'cubeDark', 'cubeMono', 'cubeXray'].map((n, i) => (
            <button key={n} aria-label={n} className={clsx('w-[12px] h-3 flex items-center justify-center', i === 3 && 'bg-[#d5d9de] border border-[#bbb]', i === 5 && 'ml-3')}><Icon name={n} className="size-[9px]" /></button>
          ))}
        </div>
      </div>
      <div className="pt-1 pl-px h-[14px]"><Check label="Transparência do material" checked /></div>
      <div className="flex items-center pl-4 gap-px text-[#666] mt-[2px]">
        <label htmlFor="quality" className="w-[30px]">Qualidade:</label>
        <Dropdown id="quality" value="Mais rápido" className="w-[44px]" />
      </div>
      <p className="mt-[2px] pl-[2px] text-[#999]">Opacidade do raio-x:</p>
    </section>
  );
}

function Tray() {
  return (
    <aside className="w-[157px] shrink-0 flex flex-col pl-[3px] bg-[#e9ebf0] overflow-hidden">
      <div className="h-[14px] shrink-0 flex items-center pl-[2px] bg-linear-to-b from-[#9cbfdf] to-[#b6cce4] text-[#2c4763]">
        <b className="flex-1">Bandeja 1</b>
        <span className="flex gap-[3px] pr-px">
          {['Fixar', 'Fechar'].map((n) => <button key={n} aria-label={n} className="size-[5px] border border-[#6f8fae]" />)}
        </span>
      </div>
      <div className="flex-1 min-h-0 flex pt-[2px]">
        <div className="flex-1 min-w-0 bg-[#f3f7fc] overflow-hidden">
          <section className="h-[119px]">
            <SectionHeader title="Informações da entidade" />
            <p className="mx-[4px] pt-[5px] h-[16px] font-bold text-[#555] border-b border-[#dde1e8]">Nenhuma seleção</p>
          </section>
          <Materials />
          <SectionHeader title="Componentes" open={false} />
          <div className="h-[3px]" />
          <Styles />
        </div>
        <div className="w-2 bg-[#eeeff3] flex flex-col items-center justify-between">
          <div className="w-full bg-white flex justify-center pt-[2px] h-[310px]"><Caret className="w-[3px] h-[2px] rotate-180" /></div>
          <Caret className="w-[3px] h-[2px] mb-[3px]" />
        </div>
      </div>
    </aside>
  );
}

export default function App() {
  return (
    <div className="h-screen flex flex-col overflow-hidden bg-[#f0f0f6] font-['Open_Sans','Noto_Sans',sans-serif] text-[6px] leading-[8px] text-[#666]">
      <header className="h-[11px] shrink-0 bg-[#4a4845] text-[#e8e8e8] flex items-center pl-[3px] gap-[3px]">
        <span className="size-[5px] bg-[#1d4b73] rounded-[1px]" />
        <h1 className="flex-1">GALPAO* - SketchUp 2024</h1>
        <div className="flex gap-4 pr-2">
          {['M1 5h8', 'M1 3h6v6H1zM3 3V1h6v6H7', 'M1 1l8 8M9 1L1 9'].map((d) => (
            <button key={d} aria-label="Janela"><svg viewBox="0 0 10 10" className="size-[5px]" fill="none" stroke="#ddd" strokeWidth="1.6"><path d={d} /></svg></button>
          ))}
        </div>
      </header>
      <nav className="h-[9px] shrink-0 flex items-center gap-[5px] pl-[4px] text-[#555]">
        {menus.map((m) => <button key={m}>{m}</button>)}
      </nav>
      <TopToolbar />
      <div className="flex-1 min-h-0 flex">
        <SideToolbar />
        <main className="flex-1 min-w-0 flex flex-col">
          <div className="h-[14px] shrink-0 flex items-end border-l border-[#555]">
            <button aria-label="Pesquisar cenas" className="w-[28px] h-[14px] flex items-center justify-center">
              <svg viewBox="0 0 24 24" className="size-2" fill="none" stroke="#333" strokeWidth="3"><circle cx="14" cy="9" r="7" /><path d="M9 14l-7 8" /></svg>
            </button>
            {['CORTE C', 'CORTE D', 'CORTE E', 'PLANTA BAIXA'].map((t, i) => (
              <button key={t} className={clsx('h-3 px-[4px] pb-[2px] border-r border-t border-[#d0d0d4]', i === 3 ? 'bg-white text-[#666]' : 'bg-[#e1e1e4] text-[#888]')}>{t}</button>
            ))}
          </div>
          <div className="flex-1 min-h-0"><Model /></div>
        </main>
        <Tray />
      </div>
      <footer className="h-[13px] shrink-0 flex items-center bg-[#f0f0f5] text-[#777]">
        <div className="w-8 flex items-center gap-[6px] pl-1 border-r border-[#dcdce0]">
          {['#aaa', '#333'].map((c) => (
            <svg key={c} viewBox="0 0 10 10" className="size-[7px]" fill="none" stroke={c} strokeWidth="1.2"><circle cx="5" cy="5" r="4" /><path d="M5 2.5v5M3.5 4h3" /></svg>
          ))}
        </div>
        <p className="flex-1 pl-px">Clique ou arraste para selecionar objetos. Shift = Adicionar/Subtrair. Ctrl = Adicionar. Shift + Ctrl = Subtrair.</p>
        <input aria-label="Medidas" className="w-[93px] h-[11px] bg-[#f4f4f8] border border-[#d0d0d6]" />
      </footer>
    </div>
  );
}
